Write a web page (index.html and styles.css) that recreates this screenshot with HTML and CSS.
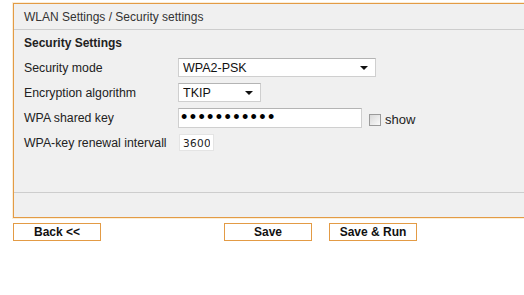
FILE: index.html
```html
<!DOCTYPE html>
<html lang="en">
<head>
    <meta charset="UTF-8">
    <title>WLAN Security settings</title>
    <link rel="stylesheet" href="styles.css">
</head>
<body>
    <div class="panel">
        <div class="panel-head">WLAN Settings / Security settings</div>

        <form class="panel-body" id="securityForm">
            <div class="section-title">Security Settings</div>

            <div class="form-row">
                <label for="sec_mode">Security mode</label>
                <span class="select-wrap mode">
                    <select id="sec_mode" name="sec_mode">
                        <option value="none">None</option>
                        <option value="wep">WEP</option>
                        <option value="wpa">WPA-PSK</option>
                        <option value="wpa2" selected>WPA2-PSK</option>
                    </select>
                </span>
            </div>

            <div class="form-row">
                <label for="enc_algo">Encryption algorithm</label>
                <span class="select-wrap algo">
                    <select id="enc_algo" name="enc_algo">
                        <option value="tkip" selected>TKIP</option>
                        <option value="aes">AES</option>
                    </select>
                </span>
            </div>

            <div class="form-row">
                <label for="wpa_key">WPA shared key</label>
                <span class="key-field">
                    <input type="password" id="wpa_key" name="wpa_key" value="secretkey12">
                    <input type="checkbox" id="show_key" class="show-box">
                    <label for="show_key" class="show-label">show</label>
                </span>
            </div>

            <div class="form-row">
                <label for="renewal">WPA-key renewal intervall</label>
                <input type="text" id="renewal" name="renewal" class="short" value="3600">
            </div>
        </form>

        <div class="panel-foot"></div>
    </div>

    <div class="buttons">
        <button type="button" class="btn">Back &lt;&lt;</button>
        <button type="button" class="btn save">Save</button>
        <button type="button" class="btn run">Save &amp; Run</button>
    </div>

    <script>
        // Toggle the key between hidden and plain text
        document.getElementById('show_key').addEventListener('change', function() {
            document.getElementById('wpa_key').type = this.checked ? 'text' : 'password';
        });
    </script>
</body>
</html>
```

FILE: styles.css
```css
body {
    margin: 0;
    padding: 3px 0 0 13px;
    font-family: "Liberation Sans", Arial, sans-serif;
    font-size: 12px;
    color: #222;
    overflow: hidden;
    background: #fff;
}
/* Panel runs off the right side, so no right border */
.panel {
    width: 511px;
    border: 1px solid #e39b45;
    border-right: none;
    background: #f0f0f0;
    box-shadow: 0 0 0 1px #fbeed8;
}
.panel-head {
    height: 25px;
    line-height: 26px;
    padding-left: 10px;
    border-bottom: 1px solid #cdcdcd;
    color: #333;
}
.panel-body {
    height: 162px;
    padding: 0 10px;
    box-sizing: border-box;
}
.section-title {
    height: 25px;
    line-height: 26px;
    font-weight: bold;
}
.form-row {
    display: flex;
    align-items: center;
    height: 25px;
}
.form-row > label {
    width: 154px;
    flex: none;
    font-size: 12.3px;
}
/* Selects with a small dark arrow */
.select-wrap {
    position: relative;
    display: inline-block;
}
.select-wrap select {
    appearance: none;
    -webkit-appearance: none;
    height: 19px;
    padding: 0 0 0 4px;
    border: 1px solid #cfcfcf;
    border-top-color: #b4b4b4;
    background: #fff;
    font-family: "Liberation Sans", Arial, sans-serif;
    font-size: 12.5px;
    color: #111;
    border-radius: 0;
    outline: none;
}
.select-wrap::after {
    content: "";
    position: absolute;
    right: 8px;
    top: 8px;
    border-left: 4px solid transparent;
    border-right: 4px solid transparent;
    border-top: 4px solid #111;
    pointer-events: none;
}
.select-wrap.mode select {
    width: 198px;
}
.select-wrap.algo select {
    width: 83px;
}
.key-field {
    display: flex;
    align-items: center;
}
.key-field input[type="password"],
.key-field input[type="text"] {
    width: 184px;
    height: 20px;
    box-sizing: border-box;
    border: 1px solid #cfcfcf;
    border-top-color: #b4b4b4;
    padding: 0 2px;
    font-size: 18px;
    line-height: 18px;
    letter-spacing: 2.4px;
    color: #000;
    outline: none;
}
.show-box {
    appearance: none;
    -webkit-appearance: none;
    width: 12px;
    height: 12px;
    margin: 4px 4px 0 7px;
    border: 1px solid #9a9a9a;
    background: linear-gradient(135deg, #d8d8d8, #fafafa);
    box-sizing: border-box;
}
.show-box:checked {
    background: #fff;
    box-shadow: inset 0 0 0 2px #fff, inset 0 0 0 6px #333;
}
.show-label {
    font-size: 13px;
    padding-top: 3px;
}
input.short {
    width: 35px;
    height: 17px;
    box-sizing: border-box;
    margin-left: 1px;
    padding: 0 3px;
    border: 1px solid #e4e4e4;
    background: #fff;
    font-family: "DejaVu Sans", Verdana, sans-serif;
    font-size: 10.5px;
    letter-spacing: 0.3px;
    color: #222;
    outline: none;
}
.panel-foot {
    height: 24px;
    border-top: 1px solid #cdcdcd;
}
/* Bottom button row */
.buttons {
    display: flex;
    margin-top: 5px;
}
.btn {
    width: 88px;
    height: 18px;
    padding: 0;
    border: 1px solid #e39b45;
    background: #fff;
    font-family: "Liberation Sans", Arial, sans-serif;
    font-size: 12px;
    font-weight: bold;
    color: #111;
}
.btn.save {
    margin-left: 123px;
}
.btn.run {
    margin-left: 17px;
}
```
